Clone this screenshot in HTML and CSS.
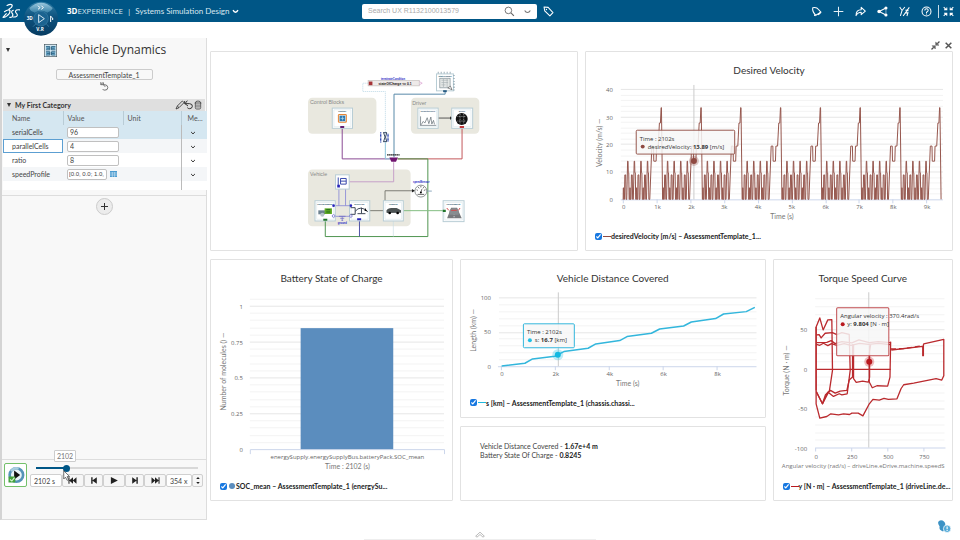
FILE: index.html
```html
<!DOCTYPE html>
<html lang="en">
<head>
<meta charset="utf-8">
<title>Systems Simulation Design</title>
<link rel="stylesheet" href="styles.css">
</head>
<body>
<header class="topbar">
  <div class="brand">
    <svg class="logo" viewBox="0 0 54 54" aria-hidden="true">
      <g fill="none" stroke="#fff" stroke-width="3" stroke-linecap="round" stroke-linejoin="round">
        <path d="M19 12q10-5 14-1q1 6-9 11M12 29q12-8 15-3q1 8-8 14q-6 5-11 4l9-10"/>
        <path d="M36 25q-6 2-4 7q5 5 1 10q-3 3-7 2"/>
        <path d="M53 24q-9-1-11 3q-1 4 3 7q4 5-1 8q-4 2-9 1"/>
      </g>
    </svg>
    <button class="compass" aria-label="Compass">
      <svg viewBox="0 0 102 108" aria-hidden="true">
        <defs>
          <linearGradient id="ball" x1="0" y1="0" x2="0" y2="1"><stop offset="0" stop-color="#2f7da6"/><stop offset=".45" stop-color="#0d527e"/><stop offset="1" stop-color="#063b61"/></linearGradient>
          <linearGradient id="shine" x1="0" y1="0" x2="0" y2="1"><stop offset="0" stop-color="#9cc8de"/><stop offset="1" stop-color="#3e86ab"/></linearGradient>
        </defs>
        <circle cx="51" cy="56" r="51" fill="url(#ball)"/>
        <path d="M16 24Q51-8 86 24Q80 38 66 36Q51 28 36 36Q20 38 16 24Z" fill="url(#shine)"/>
        <circle cx="51" cy="56" r="22" fill="#1b6390" stroke="#3b81a8" stroke-width="2"/>
        <path d="M44 44v24l17-12z" fill="none" stroke="#d6e8f2" stroke-width="3"/>
        <path d="M27 32l8 8M75 32l-8 8M27 80l8-8M75 80l-8-8" stroke="#4b8db2" stroke-width="2"/>
        <path d="M42 17l6 6-6 5M52 17l6 6-6 5" fill="none" stroke="#fff" stroke-width="3"/>
        <path d="M80 66V48M80 49l6 5v6" fill="none" stroke="#fff" stroke-width="3"/>
        <text x="8" y="60" class="compass-text">3D</text>
        <text x="37" y="93" class="compass-text">V.R</text>
      </svg>
    </button>
    <span class="platform"><b>3D</b>EXPERIENCE</span>
    <span class="pipe">|</span>
    <button class="app-name">Systems Simulation Design
      <svg class="tiny" viewBox="0 0 20 20" aria-hidden="true"><path d="M3 6q3 6 7 6t7-6" fill="none" stroke="#fff" stroke-width="4"/></svg>
    </button>
  </div>
  <div class="search">
    <input type="text" aria-label="Search" placeholder="Search UX R1132100013579">
    <button aria-label="Search"><svg class="icon" viewBox="0 0 30 30" aria-hidden="true"><circle cx="12" cy="12" r="9" fill="none" stroke="#666" stroke-width="2.4"/><path d="M19 19l8 8" stroke="#666" stroke-width="3"/></svg></button>
    <button aria-label="Search options"><svg class="tiny" viewBox="0 0 20 20" aria-hidden="true"><path d="M2 7q3 6 8 6t8-6" fill="none" stroke="#777" stroke-width="3"/></svg></button>
  </div>
  <button class="tag" aria-label="Tags"><svg class="icon" viewBox="0 0 32 32" aria-hidden="true"><path d="M3 3l12 1 14 15-9 10L5 14z" fill="none" stroke="#fff" stroke-width="3" stroke-linejoin="round"/><circle cx="10" cy="10" r="2" fill="#fff"/></svg></button>
  <nav class="actions" aria-label="Actions">
    <button aria-label="Notifications"><svg class="icon" viewBox="0 0 32 32" aria-hidden="true"><path d="M5 5q11-3 17 5q1 3 7 8l-15 9Q3 16 5 5zM9 27l4 1" fill="none" stroke="#fff" stroke-width="3" stroke-linejoin="round"/><path d="M19 24l8-7 1 5-6 5z" fill="#fff"/></svg></button>
    <button aria-label="Add"><svg class="icon" viewBox="0 0 32 32" aria-hidden="true"><path d="M16 2v28M2 16h28" stroke="#e4eff5" stroke-width="3"/></svg></button>
    <button aria-label="Share"><svg class="icon" viewBox="0 0 32 32" aria-hidden="true"><path d="M3 28q0-17 15-17V4l12 11-12 10v-7q-10 0-15 10z" fill="none" stroke="#fff" stroke-width="3" stroke-linejoin="round"/></svg></button>
    <button aria-label="Network"><svg class="icon" viewBox="0 0 32 32" aria-hidden="true"><path d="M26 6L6 16l20 10" fill="none" stroke="#fff" stroke-width="3"/><path d="M26 6v20" stroke="#fff" stroke-width="1.5"/><circle cx="26" cy="6" r="4.500" fill="#fff"/><circle cx="6" cy="16" r="5" fill="#fff"/><circle cx="26" cy="26" r="4.500" fill="#fff"/></svg></button>
    <button aria-label="Tools"><svg class="icon" viewBox="0 0 32 32" aria-hidden="true"><path d="M2 3l7 10L17 3M9 13L4 29M30 4L12 29M19 12l9 2M17 20l9 0-3 9" fill="none" stroke="#fff" stroke-width="3"/></svg></button>
    <button aria-label="Help"><svg class="icon" viewBox="0 0 32 32" aria-hidden="true"><circle cx="16" cy="16" r="13" fill="none" stroke="#fff" stroke-width="3"/><path d="M11 13q0-5 5-5t5 4q0 3-5 6v2M16 22v3" fill="none" stroke="#fff" stroke-width="3"/></svg></button>
    <span class="divider"></span>
    <button aria-label="Minimize layout"><svg class="icon" viewBox="0 0 32 32" aria-hidden="true"><path d="M2 3l8 8M11 4v7H3M30 3l-8 8M21 4v7h8M2 29l8-8M3 21h8v7M30 29l-8-8M29 21h-8v7" fill="none" stroke="#fff" stroke-width="3"/></svg></button>
  </nav>
</header>

<main class="workspace">
  <aside class="sidebar">
    <div class="model-title">
      <span class="caret"></span>
      <svg class="model-icon" viewBox="0 0 40 40" aria-hidden="true"><rect x="1" y="1" width="38" height="38" fill="#d3e7f1" stroke="#44545c" stroke-width="2"/><path d="M6 7h12v11H6zM23 7h12v11H23zM6 23h12v11H6zM23 23h12v11H23z" fill="#7cb8d8"/><path d="M6 8h12v10H6M35 8H23v10h12M6 24h12v10H6M35 24H23v10h12M8 13h10M23 13h10M8 29h10M23 29h10" fill="none" stroke="#24597a" stroke-width="2.500"/></svg>
      <h1>Vehicle Dynamics</h1>
    </div>
    <div class="template">
      <button class="template-name">AssessmentTemplate_1</button>
      <button aria-label="Reset"><svg class="icon" viewBox="0 0 30 30" aria-hidden="true"><path d="M5 3v7h11q8 1 8 8t-8 7q-5 0-6-3M12 3L5 10M12 5v5l5 6" fill="none" stroke="#666" stroke-width="2.500"/></svg></button>
    </div>
    <section class="category">
      <div class="category-head">
        <span class="caret"></span>
        <h2>My First Category</h2>
        <button aria-label="Edit"><svg class="icon" viewBox="0 0 30 30" aria-hidden="true"><path d="M3 27l4-9L22 3l5 5L12 23zM7 18l5 5" fill="none" stroke="#333" stroke-width="2.500"/></svg></button>
        <button aria-label="Undo"><svg class="icon" viewBox="0 0 30 30" aria-hidden="true"><path d="M2 3v8h15q9 1 8 8t-8 7q-5 0-7-3M10 2L3 11l9 7" fill="none" stroke="#333" stroke-width="3"/></svg></button>
        <button aria-label="Delete"><svg class="icon" viewBox="0 0 30 30" aria-hidden="true"><path d="M5 9h20M7 9q0-6 8-6t8 6v14q0 4-4 4h-8q-4 0-4-4zM12 13v10M18 13v10" fill="none" stroke="#444" stroke-width="2.500"/></svg></button>
      </div>
      <table class="params">
        <thead><tr><th class="c-name">Name</th><th class="c-value">Value</th><th class="c-unit">Unit</th><th class="c-menu">Me...</th></tr></thead>
        <tbody>
          <tr class="selected"><td><label for="p1">serialCells</label></td><td><input id="p1" type="text" value="96"></td><td></td><td><button class="more" aria-label="serialCells menu"></button></td></tr>
          <tr class="alt"><td class="focused"><label for="p2">parallelCells</label></td><td><input id="p2" type="text" value="4"></td><td></td><td><button class="more" aria-label="parallelCells menu"></button></td></tr>
          <tr><td><label for="p3">ratio</label></td><td><input id="p3" type="text" value="8"></td><td></td><td><button class="more" aria-label="ratio menu"></button></td></tr>
          <tr class="alt"><td><label for="p4">speedProfile</label></td><td><div class="with-grid"><input id="p4" type="text" value="[0.0, 0.0; 1.0,"><button aria-label="Edit table"><svg viewBox="0 0 21 18" aria-hidden="true"><path d="M0 0h21v18H0z" fill="#4a9bd0"/><path d="M0 6h21M0 12h21M7 3v15M14 3v15" stroke="#e7f2f9" stroke-width="1.500"/></svg></button></div></td><td></td><td><button class="more" aria-label="speedProfile menu"></button></td></tr>
          <tr class="blank"><td></td><td></td><td></td><td></td></tr>
        </tbody>
      </table>
    </section>
    <div class="add-row"><button class="add" aria-label="Add category"></button></div>
    <section class="player">
      <button class="live" aria-label="Simulation status"><svg viewBox="0 0 48 48" aria-hidden="true"><circle cx="25" cy="24" r="18" fill="#e8f3f8" stroke="#5594b8" stroke-width="7"/><path d="M11 14a18 18 0 0 1 20-7" fill="none" stroke="#a9cde0" stroke-width="6"/><path d="M19 12l16 12-16 12z" fill="#111"/><path d="M4 28h18v16H4z" fill="#43a23b"/><path d="M8 36l5 4 7-9" fill="none" stroke="#d8f5d0" stroke-width="3"/></svg></button>
      <div class="controls">
        <div class="slider">
          <output class="bubble" for="time">2102</output>
          <input id="time" type="range" min="0" max="12000" value="2102" aria-label="Simulation time">
          <svg class="pointer" viewBox="0 0 20 32" aria-hidden="true"><path d="M2 2v24l5-5 5 9 4-2-4-9h7z" fill="#fff" stroke="#333" stroke-width="2"/></svg>
        </div>
        <div class="transport">
          <input class="t-time" type="text" value="2102 s" aria-label="Current time">
          <button class="wide" aria-label="To start"><svg viewBox="0 0 28 20" aria-hidden="true"><path d="M1 1h3v8l10-8v8l10-8v18l-10-8v8L4 11v8H1z"/></svg></button>
          <button class="narrow" aria-label="Step back"><svg viewBox="0 0 28 20" aria-hidden="true"><path d="M6 1h4v8l12-8v18l-12-8v8H6z"/></svg></button>
          <button class="wide" aria-label="Play"><svg viewBox="0 0 28 20" aria-hidden="true"><path d="M5 0l20 10L5 20z"/></svg></button>
          <button class="narrow" aria-label="Step forward"><svg viewBox="0 0 28 20" aria-hidden="true"><path d="M22 1h-4v8L6 1v18l12-8v8h4z"/></svg></button>
          <button class="wide" aria-label="To end"><svg viewBox="0 0 28 20" aria-hidden="true"><path d="M27 1h-3v8L14 1v8L4 1v18l10-8v8l10-8v8h3z"/></svg></button>
          <input class="t-speed" type="text" value="354 x" aria-label="Playback speed">
          <button class="spin" aria-label="Change speed"><svg viewBox="0 0 12 30" aria-hidden="true"><path d="M0 10l6-7 6 7zM0 20l6 7 6-7z"/></svg></button>
        </div>
      </div>
    </section>
  </aside>

  <div class="content">
    <div class="window-tools">
      <button aria-label="Restore"><svg viewBox="0 0 27 27" aria-hidden="true"><path d="M14 3v10h10zM13 24V14H3zM24 1l2 2-8 8-2-2zM3 26l-2-2 8-8 2 2z" fill="#444" stroke="#444"/></svg></button>
      <button aria-label="Close"><svg viewBox="0 0 27 27" aria-hidden="true"><path d="M5 5l17 17M22 5L5 22" stroke="#555" stroke-width="4.500"/></svg></button>
    </div>
    <div class="board">
      <section class="card diagram" aria-label="System model">
        <svg viewBox="-267 -39 1100 597" role="img" aria-label="Vehicle model diagram">
          <g fill="#e9e8df">
            <rect x="24" y="99" width="206" height="108" rx="13"/><rect x="334" y="99" width="206" height="108" rx="13"/><rect x="24" y="315" width="309" height="171" rx="13"/>
          </g>
          <g class="zone"><text x="30" y="118">Control Blocks</text><text x="338" y="120">Driver</text><text x="30" y="335">Vehicle</text></g>
          <g fill="none" stroke-width="3">
            <path d="M127 188v95h145" stroke="#8a4a94"/>
            <path d="M206 55h-17v25h68v203" stroke="#b5d5e3" stroke-dasharray="4 2" stroke-width="2"/>
            <path d="M257 233v50h14" stroke="#91c8dc"/>
            <path d="M437 78v10H283v190" stroke="#5889a8"/>
            <path d="M294 283h194V188" stroke="#c4575a"/>
            <path d="M294 283h91v234H76v-50" stroke="#4f9450"/>
            <path d="M282 293v59H144" stroke="#c6a0c8"/>
            <path d="M104 424h48M104 456h48M117 424v-56M137 424v-56M127 456v14" stroke="#8987d6" stroke-width="2.500"/>
            <path d="M179 467v50" stroke="#5054a5"/>
            <path d="M281 467v50" stroke="#cadce3" stroke-width="2"/>
            <path d="M208 439h44M256 439v-60h88" stroke="#68685f" stroke-width="2.500"/>
            <path d="M311 439h123" stroke="#83bd82"/>
            <path d="M414 160h44" stroke="#555"/>
            <path d="M377 380h20" stroke="#8ea9be"/>
          </g>
          <g fill="#222"><path d="M452 155l10 5-10 5zM337 374l9 5-9 5z"/><circle cx="254" cy="439" r="3"/></g>
          <g fill="#fff" stroke="#b8cdd5" stroke-width="3">
            <rect x="97" y="130" width="61" height="61"/><rect x="355" y="130" width="61" height="61"/><rect x="457" y="130" width="63" height="61"/>
            <rect x="107" y="331" width="41" height="43"/><rect x="45" y="409" width="61" height="61"/><rect x="149" y="409" width="61" height="61"/><rect x="251" y="409" width="60" height="61"/><rect x="431" y="409" width="63" height="63"/><rect x="411" y="27" width="51" height="51"/>
          </g>
          <g fill="none" stroke="#dce8ed" stroke-width="2"><path d="M102 135h51v51h-51zM360 135h51v51h-51zM462 135h53v51h-53zM50 414h51v51H50zM154 414h51v51h-51zM256 414h50v51h-50zM436 414h53v53h-53z"/></g>
          <g class="part">
            <text x="127" y="143">control</text><text x="385" y="143">velocityCycle</text><text x="488" y="143">driver</text>
            <text x="75" y="421">energySupply</text><text x="179" y="421">driveLine</text><text x="281" y="421">chassis</text><text x="462" y="421">environment</text><text x="437" y="35">stateCharge</text>
          </g>
          <rect x="114" y="148" width="27" height="26" rx="4" fill="#e78636"/><rect x="118" y="152" width="19" height="18" fill="#2d79b3" stroke="#d8eef8" stroke-width="2"/><path d="M122 161h11M128 155v12" stroke="#bce0f2" stroke-width="2"/>
          <path d="M363 183v-28M363 182h47M365 180l6-10 5 5 7-16 5 18 6-20 3 21 5-11 3 12" fill="none" stroke="#59666e" stroke-width="2"/>
          <circle cx="487" cy="163" r="18" fill="#111"/><path d="M474 155h26M474 169h26M482 148v30M493 148v30" stroke="#bfc3c5" stroke-width="2" stroke-dasharray="3 2"/>
          <path d="M55 438h20v12H55z" fill="#6d8290"/><rect x="74" y="432" width="22" height="17" fill="#5eaa24"/><path d="M79 436h12M79 443h12" stroke="#206b16" stroke-width="3"/><circle cx="67" cy="451" r="6" fill="#b7c4ca"/>
          <path d="M166 441q16-20 38 1M185 430v18M173 448h24M152 430h14v20h-14" fill="none" stroke="#3c4757" stroke-width="3"/><path d="M196 431l6 10-8-2z"/>
          <path d="M260 439q4-8 15-8h16l13 7v7l-43 1z" fill="#4c5354"/><circle cx="270" cy="446" r="4"/><circle cx="294" cy="446" r="4"/>
          <path d="M443 462l12-32h18l14 32z" fill="#77797c"/><path d="M464 434v25" stroke="#fff" stroke-width="2" stroke-dasharray="4 3"/><path d="M450 440q3-9 14-9t14 9v11h-28z" fill="#888d90"/><path d="M455 438h17M442 431l6 7M482 431l-5 7" stroke="#d54849" stroke-width="3"/>
          <path d="M115 339v24M122 342h17v17h-17zM122 350h17" fill="none" stroke="#3849ac" stroke-width="3"/><path d="M117 456h20M121 462h12M125 468h5" stroke="#6560be" stroke-width="2"/>
          <g fill="#2724ba"><circle cx="101" cy="424" r="4"/><circle cx="153" cy="424" r="4"/><path d="M172 462h12v6h-12zM112 361h8v8h-8z"/></g><g fill="#fff" stroke="#5d59c7" stroke-width="2"><circle cx="101" cy="455" r="4"/><circle cx="153" cy="455" r="4"/></g>
          <path d="M121 184h12v6h-12z" fill="#641d71"/><path d="M481 184h13v6h-13z" fill="#c2383b"/><path d="M70 463h12v6H70zM430 436h9v7h-9z" fill="#20752b"/><path d="M431 76h11v6h-11z" fill="#275b83"/>
          <path d="M269 279h26l-6 13h-14z" fill="#711570"/><path d="M262 271h38" stroke="#222" stroke-width="4" stroke-dasharray="5 1"/>
          <rect x="205" y="47" width="154" height="16" fill="#eeeae9" stroke="#c3bdba" stroke-width="2"/><rect x="207" y="50" width="11" height="11" fill="#a63438"/><text x="286" y="59" class="formula">stateOfCharge &lt;= 0.1</text><text x="280" y="44" class="blue">terminateCondition</text><path d="M359 50l9 5-9 5" fill="none" stroke="#d79acd" stroke-width="2"/>
          <rect x="421" y="40" width="31" height="29" fill="#e4e7e6" stroke="#7d8d95" stroke-width="2"/><path d="M426 46h20M426 53h20M426 60h12M432 42v25M443 42v25" stroke="#a9b1b5" stroke-width="2"/><path d="M415 23h45M464 30v46" stroke="#6a8392" stroke-width="5" stroke-dasharray="2 7"/><path d="M445 69l13 6-5-11z" fill="#fff" stroke="#555" stroke-width="2"/>
          <path d="M250 204h12M250 231h12M252 205q8 12 0 25M261 205q-7 12 0 25" fill="none" stroke="#364964" stroke-width="3"/><path d="M243 203v31M265 207v25" stroke="#2b45b3" stroke-width="4" stroke-dasharray="3 1"/>
          <text x="365" y="356" class="blue">speedSensor</text><circle cx="364" cy="380" r="18" fill="#fff" stroke="#5b6263" stroke-width="2"/><path d="M351 376l4 2M356 368l3 4M364 364v5M373 368l-3 4M378 376l-5 2M364 384l3-10M354 390h20" stroke="#222" stroke-width="2"/><circle cx="364" cy="384" r="3"/><text x="127" y="478" class="blue">ground</text>
        </svg>
      </section>

      <section class="card velocity">
        <h2>Desired Velocity</h2>
        <svg viewBox="587 78 366 152" role="img" aria-label="Desired velocity over time">
          <defs>
            <path id="urban" d="M0 0H11L15 4.200H23L28 0H49L61 8.900H85L96 0H117L143 13.900H155L163 9.700H176L188 0H195"/>
            <g id="cycle" class="trace brown">
              <use href="#urban"/><use href="#urban" x="195"/><use href="#urban" x="390"/><use href="#urban" x="585"/>
              <path d="M780 0H800L861 19.400H911L919 13.900H988L1001 19.400H1051L1086 27.800H1116L1136 33.400H1146L1180 0"/>
            </g>
          </defs>
          <path class="minor" d="M621 95.500h324M621 100.500h324M621 106.500h324M621 111.500h324M621 122.500h324M621 128.500h324M621 133.500h324M621 139.500h324M621 150.500h324M621 156.500h324M621 161.500h324M621 167.500h324M621 178.500h324M621 183.500h324M621 189.500h324M621 194.500h324"/>
          <path class="major" d="M621 89.500h324M621 117.500h324M621 144.500h324M621 172.500h324"/>
          <path class="axis" d="M621 200.500h324M623.500 200v4M657.500 200v4M691.500 200v4M725.500 200v4M759.500 200v4M793.500 200v4M827.500 200v4M860.500 200v4M894.500 200v4M928.500 200v4"/>
          <path class="cross" d="M694.500 85v115"/>
          <g transform="translate(623 200) scale(.0339 -2.760)">
            <use href="#cycle"/><use href="#cycle" x="1180"/><use href="#cycle" x="2360"/><use href="#cycle" x="3540"/><use href="#cycle" x="4720"/><use href="#cycle" x="5900"/><use href="#cycle" x="7080"/><use href="#cycle" x="8260"/>
          </g>
          <g class="tick end"><text x="613" y="92">40</text><text x="613" y="120">30</text><text x="613" y="147">20</text><text x="613" y="175">10</text><text x="613" y="203">0</text></g>
          <g class="tick mid"><text x="624" y="210">0</text><text x="658" y="210">1k</text><text x="692" y="210">2k</text><text x="725" y="210">3k</text><text x="759" y="210">4k</text><text x="793" y="210">5k</text><text x="827" y="210">6k</text><text x="861" y="210">7k</text><text x="895" y="210">8k</text><text x="929" y="210">9k</text></g>
          <text class="axis-title" x="783" y="220">Time (s)</text>
          <text class="axis-title" transform="translate(602 143) rotate(-90)">Velocity (m/s) —</text>
          <circle cx="694.500" cy="161.500" r="5" fill="#8f4a42" opacity=".3"/><circle cx="694.500" cy="161.500" r="3" fill="#8f4a42"/>
          <rect x="636.500" y="130.500" width="99" height="24" rx="1" class="tip brown-tip"/>
          <text class="tip-text" x="640" y="141">Time : 2102s</text><circle cx="643" cy="147" r="2" fill="#8f4a42"/><text class="tip-text" x="648" y="149">desiredVelocity: <tspan class="strong">13.89</tspan> [m/s]</text>
        </svg>
        <label class="legend"><input type="checkbox" checked><i class="key brown-key"></i><span>desiredVelocity [m/s] – AssessmentTemplate_1...</span></label>
      </section>

      <section class="card battery">
        <h2>Battery State of Charge</h2>
        <svg viewBox="211 286 242 192" role="img" aria-label="Battery state of charge">
          <path class="minor" d="M250 298.500h195M250 312.500h195M250 319.500h195M250 327.500h195M250 334.500h195M250 348.500h195M250 355.500h195M250 363.500h195M250 370.500h195M250 384.500h195M250 391.500h195M250 399.500h195M250 406.500h195M250 420.500h195M250 427.500h195M250 435.500h195M250 442.500h195"/>
          <path class="major" d="M250 305.500h195M250 341.500h195M250 377.500h195M250 413.500h195"/>
          <path class="axis" d="M250.500 454v-4.500h195v4.500"/>
          <rect x="301" y="327.500" width="93" height="121.500" fill="#5b8dbe"/>
          <g class="tick end"><text x="243" y="308">1</text><text x="243" y="344">0.75</text><text x="243" y="380">0.5</text><text x="243" y="416">0.25</text><text x="243" y="452">0</text></g>
          <text class="tick mid" x="348" y="459">energySupply.energySupplyBus.batteryPack.SOC_mean</text>
          <text class="axis-title" x="348" y="469">Time : 2102 (s)</text>
          <text class="axis-title" transform="translate(226 371) rotate(-90)">Number of molecules () —</text>
        </svg>
        <label class="legend"><input type="checkbox" checked><i class="dot"></i><span>SOC_mean – AssessmentTemplate_1 (energySu...</span></label>
      </section>

      <section class="card distance">
        <h2>Vehicle Distance Covered</h2>
        <svg viewBox="461 286 304 109" role="img" aria-label="Vehicle distance covered over time">
          <path class="minor" d="M499 304.500h258M499 311.500h258M499 318.500h258M499 325.500h258M499 338.500h258M499 345.500h258M499 352.500h258M499 359.500h258"/>
          <path class="major" d="M499 297.500h258M499 332.500h258"/>
          <path class="axis" d="M498 366.500h259M501.500 366v4M555.500 366v4M609.500 366v4M663.500 366v4M717.500 366v4"/>
          <path class="cross" d="M558.500 292v74"/>
          <path class="trace cyan" d="M501.700 365.700L525 363L532.700 358.700L555 356L564 351.300L588.300 348L596 343.700L620 340.300L627.300 336.300L651.700 333L660 328.700L684 325.700L691.700 321.700L716 318.300L724 313.700L746.700 311.300L755.300 307"/>
          <g class="tick end"><text x="491" y="300">100</text><text x="491" y="334">50</text><text x="491" y="369">0</text></g>
          <g class="tick mid"><text x="502" y="376">0</text><text x="556" y="376">2k</text><text x="610" y="376">4k</text><text x="664" y="376">6k</text><text x="718" y="376">8k</text></g>
          <text class="axis-title" x="628" y="386">Time (s)</text>
          <text class="axis-title" transform="translate(476 330) rotate(-90)">Length (km) —</text>
          <circle cx="558" cy="354.500" r="5.500" fill="#20bfe5" opacity=".3"/><circle cx="558" cy="354.500" r="3" fill="#13b9e1"/>
          <rect x="523.500" y="323.500" width="51" height="24" rx="1" class="tip cyan-tip"/>
          <text class="tip-text" x="527" y="334">Time : 2102s</text><circle cx="530" cy="340" r="2" fill="#20bfe5"/><text class="tip-text" x="535" y="342">s: <tspan class="strong">16.7</tspan> [km]</text>
        </svg>
        <label class="legend"><input type="checkbox" checked><i class="key cyan-key"></i><span>s [km] – AssessmentTemplate_1 (chassis.chassi...</span></label>
      </section>

      <section class="card torque">
        <h2>Torque Speed Curve</h2>
        <svg viewBox="774 286 178 192" role="img" aria-label="Torque against angular velocity">
          <path class="minor" d="M815 298.500h129M815 306.500h129M815 314.500h129M815 321.500h129M815 337.500h129M815 345.500h129M815 353.500h129M815 361.500h129M815 376.500h129M815 384.500h129M815 392.500h129M815 400.500h129M815 416.500h129M815 424.500h129M815 432.500h129M815 439.500h129"/>
          <path class="major" d="M815 329.500h129M815 408.500h129"/>
          <path class="axis" d="M815 447.500h130M815.500 447v4M851.500 447v4M887.500 447v4M923.500 447v4"/>
          <path class="cross" d="M868.500 292v155"/>
          <g class="trace red" transform="translate(770 260) scale(.3333)">
            <path d="M138 390V200L149 173L159 209L173 179L185 178L187 330L178 390L157 430L138 393"/>
            <path d="M139 224L147 223L153 233L165 219L187 217L200 223L215 217L237 222L240 330L231 400L215 403L207 400L190 408L173 395L157 430L139 394"/>
            <path d="M139 247L170 246L183 241L195 250L215 244L245 248L266 239L297 247L324 244L360 247"/>
            <path d="M139 252L149 255L160 249L173 256L184 250L200 255L222 250L242 255L268 249L295 252L325 249L360 253"/>
            <path d="M247 252V350L237 359L230 390L210 392L195 398L181 390L166 403L157 430M250 252V355L258 366L277 362L294 365L298 350V255M301 254L297 280V365L306 382L320 376L352 377L359 350L361 244"/>
            <path d="M138 327H361"/>
            <path d="M138 200V430L149 473L170 468L182 460L205 463L220 460L238 462L245 458L264 458L278 466L296 432L308 417L327 419L341 414L354 417L380 415L392 385L400 373L430 368L497 355L514 359L520 346V237L460 251L459 254V286L457 286V258L363 269"/>
            <path d="M362 266L400 265L457 256" stroke-dasharray="5 3"/>
          </g>
          <g class="tick end"><text x="807" y="332">50</text><text x="807" y="372">0</text><text x="807" y="411">-50</text><text x="807" y="450">-100</text></g>
          <g class="tick mid"><text x="816" y="458">0</text><text x="852" y="458">250</text><text x="888" y="458">500</text><text x="924" y="458">750</text></g>
          <text class="axis-title small" x="863" y="467">Angular velocity (rad/s) – driveLine.eDrive.machine.speedS</text>
          <text class="axis-title" transform="translate(789 370) rotate(-90)">Torque (N · m) —</text>
          <circle cx="869" cy="361.500" r="5" fill="#c62228" opacity=".3"/><circle cx="869" cy="361.500" r="3" fill="#b9191f"/>
          <rect x="836.500" y="307.500" width="52" height="48" rx="1" class="tip red-tip"/>
          <text class="tip-text" x="840" y="318">Angular velocity : 370.4rad/s</text><circle cx="842.500" cy="324" r="2" fill="#b9191f"/><text class="tip-text" x="847" y="326">y: <tspan class="strong">9.804</tspan> [N · m]</text>
        </svg>
        <label class="legend"><input type="checkbox" checked><i class="key red-key"></i><span>y [N · m] – AssessmentTemplate_1 (driveLine.de...</span></label>
      </section>

      <section class="card summary">
        <p>Vehicle Distance Covered - <b>1.67e+4 m</b></p>
        <p>Battery State Of Charge - <b>0.8245</b></p>
      </section>
    </div>
    <footer class="footer">
      <button class="drawer" aria-label="Open drawer"><svg viewBox="0 0 30 20" aria-hidden="true"><path d="M2 15L15 3l13 12-4 3-9-8-9 8z" fill="#fff" stroke="#999" stroke-width="2"/></svg></button>
      <button class="assist" aria-label="Assistant"><svg viewBox="0 0 40 40" aria-hidden="true"><path d="M3 8q4-7 12-4q8 5 7 12l6 8-12 9q-12-4-9-13q-5-5-4-12z" fill="#3c92c5"/><circle cx="27" cy="26" r="10" fill="#56abd8" stroke="#fff" stroke-width="2"/><path d="M27 20v7M27 29v3" stroke="#fff" stroke-width="3"/></svg></button>
    </footer>
  </div>
</main>
</body>
</html>
```
FILE: styles.css
```css
* { box-sizing: border-box; }

body {
  margin: 0;
  height: 100vh;
  display: flex;
  flex-direction: column;
  background: #fff;
  color: #444;
  font: 7px/10px Lato, "Liberation Sans", sans-serif;
}

button { padding: 0; border: 0; background: none; color: inherit; font: inherit; display: flex; align-items: center; justify-content: center; }
input { font: inherit; color: inherit; margin: 0; min-width: 0; }
h1, h2, p { margin: 0; font-weight: 400; }
svg { display: block; }
.icon { width: 11px; height: 11px; }
.tiny { width: 7px; height: 7px; }

/* Top bar */
.topbar {
  height: 22px;
  flex: none;
  display: grid;
  grid-template-columns: 362px 175px 1fr auto;
  align-items: center;
  background: #005686;
  color: #d9e8f0;
  font: 8px/12px "Open Sans", sans-serif;
}
.brand { display: flex; align-items: center; gap: 4px; }
.logo { width: 20px; height: 20px; }
.compass { width: 34px; height: 22px; align-items: flex-start; position: relative; z-index: 2; }
.compass svg { width: 34px; height: 36px; flex: none; }
.compass-text { font: bold 14px "Open Sans", sans-serif; fill: #fff; }
.platform b { color: #fff; }
.platform { margin-left: 5px; }
.app-name { gap: 3px; font-family: Lato, sans-serif; }
.search { height: 15px; display: flex; align-items: center; gap: 9px; padding: 0 6px; border-radius: 2px; background: #fff; font: 7px/12px "Liberation Sans", sans-serif; }
.search input { flex: 1; padding: 0; border: 0; outline: 0; background: none; }
.search input::placeholder { color: #aaa; }
.tag { width: 22px; }
.actions { display: flex; align-items: center; gap: 11px; padding-right: 6px; }
.divider { width: 1px; height: 13px; background: #c7dbe6; margin-right: -7px; margin-left: -5px; }

/* Work area */
.workspace { flex: 1; min-height: 0; display: flex; gap: 3px; }

.sidebar {
  width: 207px;
  flex: none;
  margin: 16px 0 20px;
  display: flex;
  flex-direction: column;
  border: 1px solid #ddd;
  border-left: 2px solid #d4d4d4;
  border-top: 0;
  background: #f8f8f8;
}
.caret { border: 2px solid transparent; border-top: 4px solid #333; border-bottom: 0; margin: 0 1px; }
.model-title { display: flex; align-items: center; height: 24px; padding-left: 3px; }
.model-icon { width: 13px; height: 13px; margin-left: 33px; }
.model-title h1 { margin-left: 12px; color: #333; font: 12px/24px "Open Sans", sans-serif; }
.template { display: flex; flex-direction: column; align-items: center; gap: 1px; padding-top: 7px; height: 37px; }
.template-name { width: 97px; height: 11px; border: 1px solid #ccc; border-radius: 2px; }
.category { padding: 0 1px; border-bottom: 1px solid #ddd; height: 97px; }
.category-head { display: flex; align-items: center; height: 12px; padding: 0 2px 0 3px; background: #dfdfdf; color: #333; }
.category-head h2 { flex: 1; margin-left: 3px; font: bold 7px/12px Lato, sans-serif; }
.category-head .icon { width: 10px; height: 10px; }
.category-head button { margin-left: -1px; }

.params { width: 100%; border-collapse: collapse; table-layout: fixed; background: #fff; }
.params tr { height: 14px; }
.params th, .params td { padding: 0 0 0 4px; text-align: left; font-weight: 400; }
.params th:first-child, .params td:first-child { padding-left: 9px; }
.params th { border-right: 1px solid #b9ccd6; color: #555; }
.params th:last-child { border-right: 0; padding-left: 6px; }
.params td:nth-child(3) { border-right: 1px solid #bbb; }
.params thead, .params .selected { background: #d5e7f1; }
.params .alt { background: #f4f6f8; }
.params .blank { height: 9px; }
.c-name { width: 60px; }
.c-value { width: 60px; }
.c-unit { width: 58px; }
.c-menu { width: 26px; }
.params input { display: block; width: 52px; height: 11px; padding: 0 2px; border: 1px solid #c0c0c0; border-radius: 2px; background: #fff; }
.params .focused { background: #fff; outline: 1px solid #5c9fd2; outline-offset: -1px; }
.with-grid { display: flex; align-items: center; gap: 3px; }
.params .with-grid input { width: 40px; padding: 0 0 0 1px; font: 6px "Liberation Sans", sans-serif; }
.with-grid svg { width: 7px; height: 6px; }
.more { width: 4px; height: 4px; margin-left: 5px; border: solid #444; border-width: 0 1px 1px 0; border-radius: 0 0 2px 0; transform: rotate(45deg); }

.add-row { flex: 1; display: flex; justify-content: center; align-items: flex-start; padding-top: 2px; }
.add { width: 17px; height: 17px; border: 1px solid #ccc; border-radius: 50%; background: linear-gradient(#333, #333) center / 7px 1px no-repeat, linear-gradient(#333, #333) center / 1px 7px no-repeat, #ececec; }

/* Simulation player */
.player { display: flex; align-items: flex-start; gap: 3px; height: 60px; padding: 3px 2px; border-top: 1px solid #ddd; }
.live { width: 23px; height: 24px; flex: none; border: 1px solid #74c06a; border-radius: 2px; background: #fff; }
.live svg { width: 18px; height: 18px; }
.controls { flex: 1; min-width: 0; }
.slider { height: 11px; padding: 0 6px; position: relative; }
.slider input { -webkit-appearance: none; appearance: none; display: block; width: 100%; height: 10px; background: linear-gradient(90deg, #005686 18%, #d8d8d8 18%) center / 100% 2px no-repeat; }
.slider input::-webkit-slider-thumb { -webkit-appearance: none; width: 7px; height: 7px; border-radius: 50%; background: #005686; }
.bubble { position: absolute; left: 24px; top: -13px; width: 22px; height: 12px; border: 1px solid #ccc; border-radius: 1px; background: #fff; color: #777; text-align: center; line-height: 10px; }
.pointer { position: absolute; left: 33px; top: 7px; width: 7px; height: 11px; z-index: 1; }
.transport { display: flex; height: 13px; }
.transport input, .transport button { border: 1px solid #d0d0d0; border-radius: 2px; background: #f6f6f6; }
.transport input { height: 13px; padding: 0 3px; background: #fff; }
.transport svg { width: 10px; height: 7px; fill: #222; }
.t-time { width: 32px; }
.wide { width: 22px; }
.narrow { width: 19px; }
.t-speed { width: 26px; }
.transport .spin { width: 11px; }
.transport .spin svg { width: 4px; height: 9px; }

/* Dashboard */
.content { flex: 1; min-width: 0; display: flex; flex-direction: column; padding-right: 7px; }
.window-tools { height: 29px; display: flex; justify-content: flex-end; align-items: flex-end; gap: 4px; padding-bottom: 1px; }
.window-tools svg { width: 9px; height: 9px; }
.board { flex: 1; min-height: 0; display: grid; grid-template-columns: repeat(12, minmax(0, 1fr)); grid-template-rows: repeat(11, minmax(0, 1fr)); gap: 8px 7px; }
.card { display: flex; flex-direction: column; min-height: 0; border: 1px solid #e2e2e2; border-radius: 1px; background: #fff; overflow: hidden; }
.card > svg { width: 100%; flex: 1; min-height: 0; }
.card h2 { flex: none; padding-top: 10px; text-align: center; color: #333; font: 10px/16px Lato, sans-serif; }
.diagram { grid-area: 1 / 1 / 6 / 7; }
.velocity { grid-area: 1 / 7 / 6 / 13; }
.battery { grid-area: 6 / 1 / 12 / 5; }
.distance { grid-area: 6 / 5 / 10 / 10; }
.torque { grid-area: 6 / 10 / 12 / 13; }
.summary { grid-area: 10 / 5 / 12 / 10; padding: 15px 19px; line-height: 9px; }
.summary b { color: #222; }

.legend { flex: none; display: flex; align-items: center; height: 14px; margin: 0 9px 7px; color: #222; font: bold 7px/14px Lato, sans-serif; white-space: nowrap; }
.legend input { flex: none; width: 7px; height: 7px; margin-right: 1px; accent-color: #1677e0; }
.key { flex: none; width: 8px; height: 1px; }
.dot { flex: none; width: 6px; height: 6px; margin: 0 1px; border-radius: 50%; background: #5b8dbe; }
.brown-key { background: #8f4a42; }
.cyan-key { background: #20b8dd; }
.red-key { background: #b9191f; }

/* Chart parts */
.minor, .major, .axis, .cross, .trace { fill: none; stroke-width: 1px; }
.minor { stroke: #f3f3f3; }
.major { stroke: #e6e6e6; }
.axis { stroke: #ccd6eb; }
.cross { stroke: #ccc; }
.trace { stroke-linejoin: round; }
.trace, .trace path, #urban { vector-effect: non-scaling-stroke; }
.brown { stroke: #96574e; }
.cyan { stroke: #32b6dc; stroke-width: 1.5px; }
.red { stroke: #ba2a2e; stroke-width: 1.3px; }
.tick { fill: #666; font: 6px "Open Sans", sans-serif; }
.end { text-anchor: end; }
.mid { text-anchor: middle; }
.axis-title { fill: #777; font: 7px Lato, sans-serif; text-anchor: middle; }
.axis-title.small { font: 6px "Open Sans", sans-serif; }
.tip { fill: #f7f7f7; fill-opacity: .85; }
.brown-tip { stroke: #96574e; }
.cyan-tip { stroke: #32b6dc; }
.red-tip { stroke: #c14e51; }
.tip-text { fill: #333; font: 6px "Open Sans", sans-serif; }
.strong { font-weight: 700; }

/* Model diagram labels */
.zone { fill: #888; font: 16px "Liberation Sans", sans-serif; }
.part { fill: #234c64; font: bold 7px "Liberation Sans", sans-serif; text-anchor: middle; }
.formula { fill: #111; font: bold 10px "Liberation Sans", sans-serif; text-anchor: middle; }
.blue { fill: #2222c4; font: bold 8px "Liberation Sans", sans-serif; text-anchor: middle; }

.footer { height: 39px; flex: none; position: relative; }
.drawer { position: absolute; left: 154px; right: 357px; bottom: 0; height: 10px; border-bottom: 1px solid #eee; }
.drawer svg { width: 10px; height: 7px; }
.assist { position: absolute; right: 1px; top: 18px; }
.assist svg { width: 15px; height: 15px; }
```
